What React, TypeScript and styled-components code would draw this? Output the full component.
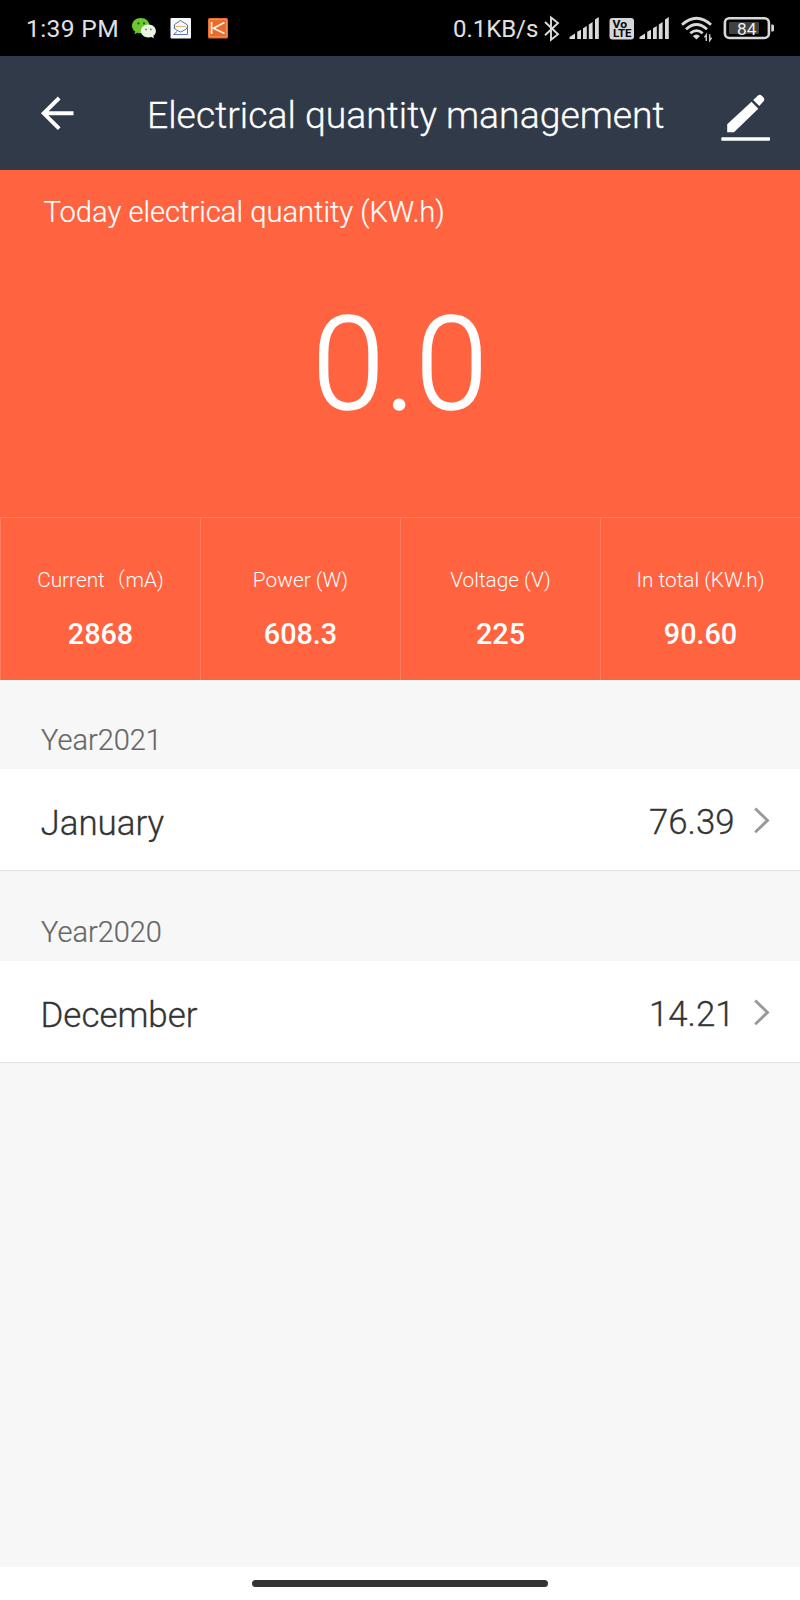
import React from "react";
import styled, { createGlobalStyle } from "styled-components";

const GlobalStyle = createGlobalStyle`
  *, *::before, *::after { box-sizing: border-box; }
  body {
    margin: 0;
    background: #f7f7f7;
    font-family: Roboto, "Noto Sans CJK SC", sans-serif;
    font-weight: 300;
  }
`;

const Screen = styled.div`
  display: flex;
  flex-direction: column;
  width: 800px;
  height: 1600px;
  overflow: hidden;
  background: #f7f7f7;
`;

const StatusBar = styled.header`
  display: flex;
  justify-content: space-between;
  height: 56px;
  padding: 0 25px 0 26px;
  background: #000;
  color: #e0e0e0;
`;

const StatusGroup = styled.div`
  display: flex;
  align-items: flex-start;

  svg { display: block; flex: none; }
`;

const Clock = styled.span`
  width: 105px;
  padding-top: 9px;
  font-size: 24.6px;
  line-height: 40px;
  font-weight: 400;
  letter-spacing: 0.35px;
  white-space: nowrap;
`;

const NetworkSpeed = styled.span`
  width: 90px;
  padding-top: 9px;
  font-size: 24px;
  line-height: 41px;
  font-weight: 400;
  letter-spacing: -0.05px;
  white-space: nowrap;
`;

const TitleBar = styled.div`
  display: flex;
  align-items: center;
  height: 114px;
  padding: 0 29px 0 40px;
  background: #303a49;
  color: #fff;
`;

const IconButton = styled.button`
  display: flex;
  padding: 0;
  border: 0;
  background: none;
  color: inherit;
`;

const Title = styled.h1`
  flex: 1;
  margin: 0;
  padding: 4px 0 0 73px;
  font-size: 37.35px;
  line-height: 44px;
  font-weight: 300;
  -webkit-text-stroke: 0.3px currentColor;
  white-space: nowrap;
`;

const TodayPanel = styled.section`
  display: flex;
  flex-direction: column;
  height: 347px;
  padding-top: 22px;
  background: #ff6340;
  color: #fff;
`;

const TodayLabel = styled.div`
  padding-left: 43.5px;
  font-size: 29.15px;
  line-height: 40px;
  -webkit-text-stroke: 0.2px currentColor;
`;

const TodayValue = styled.div`
  margin-top: 52.5px;
  text-align: center;
  font-size: 130px;
  line-height: 160px;
  -webkit-text-stroke: 1.6px currentColor;
`;

const Stats = styled.section`
  display: grid;
  grid-template-columns: repeat(4, 1fr);
  height: 163px;
  background: #ff6340;
  color: #fff;
`;

const Stat = styled.div`
  border-top: 1px solid #ff7d5d;
  border-left: 1px solid #ff7d5d;
  padding-top: 47px;
  text-align: center;
  white-space: nowrap;
`;

const StatLabel = styled.div`
  font-size: 20.8px;
  line-height: 30px;
`;

const StatValue = styled.div`
  margin-top: 19px;
  font-size: 28.8px;
  line-height: 40px;
  font-weight: 500;
`;

const YearLabel = styled.div<{ $height: number }>`
  display: flex;
  align-items: flex-end;
  height: ${(p) => p.$height}px;
  padding: 0 41px 9.5px;
  font-size: 28.95px;
  line-height: 40px;
  color: #666;
  -webkit-text-stroke: 0.2px currentColor;
`;

const MonthRow = styled.div`
  display: flex;
  align-items: center;
  height: 102px;
  padding: 0 30px 0 40.5px;
  background: #fff;
  border-bottom: 1px solid #e2e2e2;
  color: #333;
  font-size: 34.9px;
  line-height: 42px;
  -webkit-text-stroke: 0.3px currentColor;
`;

const MonthName = styled.span`
  flex: 1;
  padding-top: 9px;
`;

const MonthValue = styled.span`
  width: 105px;
  padding-top: 4px;
  font-size: 34.8px;
`;

const NavigationBar = styled.footer`
  display: flex;
  justify-content: center;
  height: 33px;
  margin-top: auto;
  padding-top: 13px;
  background: #fff;
`;

const HomeHandle = styled.div`
  width: 296px;
  height: 7px;
  border-radius: 4px;
  background: #333;
`;

const WeChatIcon = () => (
  <svg width="39" height="56" viewBox="131 0 39 56">
    <path d="M140.8 18c-5 0-8.8 3.4-8.8 7.7 0 2.4 1.2 4.500 3.200 5.900l-.8 2.600 3-1.500c1 .4 2.200.6 3.400.6 5 0 8.800-3.400 8.800-7.600s-3.800-7.700-8.800-7.700z" fill="#6cc82e" />
    <path d="M148.400 24.500c-4.300 0-7.500 2.900-7.500 6.500s3.200 6.500 7.500 6.500c1 0 2-.2 2.900-.5l2.700 1.300-.7-2.300c1.700-1.200 2.600-3 2.600-5 0-3.600-3.200-6.500-7.500-6.500z" fill="#e9f5e4" />
    <g fill="#27500f">
      <circle cx="138.400" cy="23.400" r="1.100" />
      <circle cx="144" cy="23.400" r="1.100" />
    </g>
    <g fill="#6d7769">
      <circle cx="146" cy="29.400" r=".9" />
      <circle cx="150.800" cy="29.400" r=".9" />
    </g>
  </svg>
);

const MailIcon = () => (
  <svg width="38" height="56" viewBox="170 0 38 56">
    <rect x="170.500" y="18" width="20.500" height="20.500" rx="1" fill="#f8f9fb" />
    <g fill="none" strokeWidth="1" strokeLinejoin="round">
      <path d="M174.500 29v-4.500l6-4 7 4.500v9.500h-14l3.500-3" stroke="#5b74a6" />
      <path d="M174 27q1 3 4 3.800l2.500 1.200 2.500-1.200q3.500-1 4.500-4" stroke="#5b74a6" />
      <path d="M175.500 26.500h10.500" stroke="#dcb968" />
    </g>
  </svg>
);

const KIcon = () => (
  <svg width="21" height="56" viewBox="208 0 21 56">
    <rect x="208" y="18" width="20" height="20.500" rx="1.500" fill="#ea6b2b" />
    <rect x="209.600" y="19.600" width="16.800" height="17.200" rx="1" fill="none" stroke="#f4a47c" strokeWidth=".7" />
    <path d="M211.600 22v12M224.500 22.500l-11 5.700 11 5.300" fill="none" stroke="#fff1e5" strokeWidth="1.700" />
  </svg>
);

const BluetoothIcon = () => (
  <svg width="26" height="56" viewBox="543 0 26 56">
    <path d="M545 22l13 12.300-7 5.500V17.500l7 5.500-13 12.300" fill="none" stroke="#dcdcdc" strokeWidth="1.900" />
  </svg>
);

const SignalIcon = ({ width }: { width: number }) => (
  <svg width={width} height="56" viewBox={`0 0 ${width} 56`} fill="#d9d9d9">
    <path d="M.5 39v-2l5.500-3.500V39zM8.200 39v-7.200l3.800-2V39zM14 39V28.300l3.800-2.200V39zM19.800 39V24.600l3.800-2.700V39zM26 39V19.500l3.800-2.500v22z" />
  </svg>
);

const VolteIcon = () => (
  <svg width="30" height="56" viewBox="609 0 30 56">
    <rect x="609.500" y="18" width="24.500" height="21.500" rx="3" fill="#d6d6d6" />
    <g fill="#050505" fontFamily="Roboto, sans-serif" fontWeight="700">
      <text x="612.500" y="27.600" fontSize="10.200" textLength="14.500" lengthAdjust="spacingAndGlyphs">Vo</text>
      <text x="613" y="37" fontSize="10.400" textLength="18.500" lengthAdjust="spacingAndGlyphs">LTE</text>
    </g>
  </svg>
);

const WifiIcon = () => (
  <svg width="42" height="56" viewBox="681 0 42 56">
    <g fill="none" stroke="#d9d9d9" strokeWidth="2.800">
      <path d="M682 24.700q14.500-13 29 0" />
      <path d="M686 29.200q10.500-9.400 21 0" />
      <path d="M690.300 33.300q6.200-5.400 12.400 0" />
    </g>
    <path d="M692.800 36q3.700-3.200 7.200 0l-3.600 3.600z" fill="#d9d9d9" />
    <path d="M706.300 41v-6.200l-1.900 2.600M709.700 34.200v6.200l1.900-2.600" fill="none" stroke="#c8c8c8" strokeWidth="1.500" />
  </svg>
);

const BatteryIcon = () => (
  <svg width="52" height="56" viewBox="723 0 52 56">
    <rect x="724.900" y="18.200" width="44" height="19.800" rx="4.500" fill="#000" stroke="#d9d9d9" strokeWidth="2.600" />
    <rect x="729" y="22" width="30" height="12" rx="1" fill="#414141" />
    <path d="M771.300 24.500h1.200q1.500 0 1.500 1.500v4q0 1.500-1.500 1.500h-1.200z" fill="#d9d9d9" />
    <text x="737" y="34.600" fill="#efefef" fontFamily="Roboto, sans-serif" fontWeight="400" fontSize="17.300">84</text>
  </svg>
);

const BackIcon = () => (
  <svg width="34" height="36" viewBox="40 95 34 36" fill="none" stroke="#fff" strokeWidth="3.900">
    <path d="M59.200 98l-15.500 15.300 15.500 15.300M43.500 113.300h30" />
  </svg>
);

const EditIcon = () => (
  <svg width="50" height="56" viewBox="721 84.500 50 56" fill="#fff">
    <path d="M727.200 131.700v-8L751.500 101.300l6.800 7-24.300 23.400z" />
    <path d="M753.200 99.500l4.500-4.300q2.200-1.800 4.300.2l1.300 1.300q2 2.200 0 4.300l-4 4.400z" />
    <rect x="721.300" y="136.800" width="48.700" height="3.500" rx=".8" />
  </svg>
);

const ChevronIcon = () => (
  <svg width="16" height="28" viewBox="755 806 16 28" fill="none" stroke="#9a9a9a" strokeWidth="2.900">
    <path d="M756.200 808.500l12.300 11.900-12.300 11.900" />
  </svg>
);

const stats = [
  { label: "Current（mA)", value: "2868" },
  { label: "Power (W)", value: "608.3" },
  { label: "Voltage (V)", value: "225" },
  { label: "In total (KW.h)", value: "90.60" },
];

const history = [
  { year: "2021", month: "January", value: "76.39", labelHeight: 89 },
  { year: "2020", month: "December", value: "14.21", labelHeight: 90 },
];

export default function App() {
  return (
    <Screen>
      <GlobalStyle />
      <StatusBar>
        <StatusGroup>
          <Clock>1:39 PM</Clock>
          <WeChatIcon />
          <MailIcon />
          <KIcon />
        </StatusGroup>
        <StatusGroup>
          <NetworkSpeed>0.1KB/s</NetworkSpeed>
          <BluetoothIcon />
          <SignalIcon width={40} />
          <VolteIcon />
          <SignalIcon width={42} />
          <WifiIcon />
          <BatteryIcon />
        </StatusGroup>
      </StatusBar>
      <TitleBar>
        <IconButton aria-label="Back"><BackIcon /></IconButton>
        <Title>Electrical quantity management</Title>
        <IconButton aria-label="Edit"><EditIcon /></IconButton>
      </TitleBar>
      <TodayPanel>
        <TodayLabel>Today electrical quantity (KW.h)</TodayLabel>
        <TodayValue>0.0</TodayValue>
      </TodayPanel>
      <Stats>
        {stats.map((s) => (
          <Stat key={s.label}>
            <StatLabel>{s.label}</StatLabel>
            <StatValue>{s.value}</StatValue>
          </Stat>
        ))}
      </Stats>
      {history.map((h) => (
        <React.Fragment key={h.year}>
          <YearLabel $height={h.labelHeight}>Year{h.year}</YearLabel>
          <MonthRow>
            <MonthName>{h.month}</MonthName>
            <MonthValue>{h.value}</MonthValue>
            <ChevronIcon />
          </MonthRow>
        </React.Fragment>
      ))}
      <NavigationBar>
        <HomeHandle />
      </NavigationBar>
    </Screen>
  );
}
